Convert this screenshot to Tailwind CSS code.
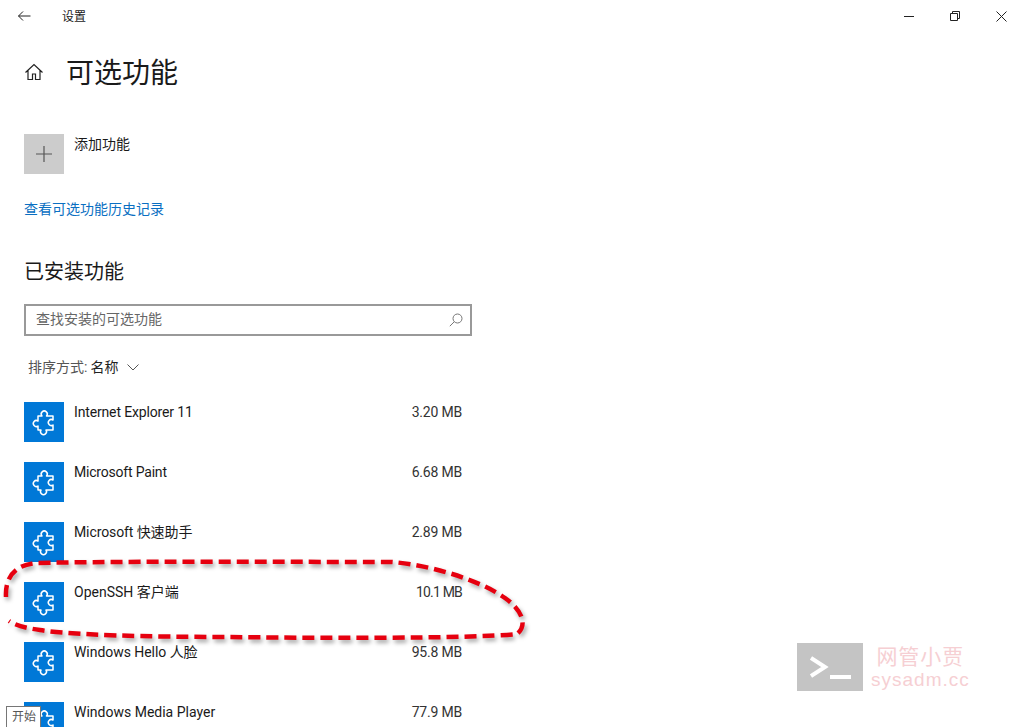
<!DOCTYPE html>
<html lang="zh-CN">
<head>
<meta charset="utf-8">
<title>设置</title>
<script src="https://cdn.jsdelivr.net/npm/@tailwindcss/browser@4"></script>
</head>
<body class="bg-white">
<div class="relative w-[1024px] h-[727px] overflow-hidden bg-white text-[#1a1a1a] font-['Roboto','Noto_Sans_CJK_SC',sans-serif]">
  <!-- title bar -->
  <div class="flex items-center h-[32px]">
    <div class="w-[48px] flex justify-center">
      <svg width="16" height="16" viewBox="0 0 16 16" fill="none" stroke="#222" stroke-width="1"><path d="M2.500 8H14.500M7 3.500L2.500 8 7 12.500"/></svg>
    </div>
    <div class="ml-[14px] text-[12px] leading-[16px] pt-[2px]">设置</div>
    <div class="ml-auto flex">
      <div class="w-[46px] h-[32px] flex items-center justify-center"><svg width="10" height="10" viewBox="0 0 10 10" stroke="#222" fill="none"><path d="M0 5.500H10"/></svg></div>
      <div class="w-[46px] h-[32px] flex items-center justify-center"><svg width="10" height="10" viewBox="0 0 10 10" stroke="#222" fill="none"><path d="M.5 2.500h7v7h-7zM2.500 2.500V.5h7v7h-2"/></svg></div>
      <div class="w-[46px] h-[32px] flex items-center justify-center"><svg width="11" height="11" viewBox="0 0 11 11" stroke="#222" fill="none"><path d="M.5.5l10 10M10.500.5l-10 10"/></svg></div>
    </div>
  </div>
  <!-- page header -->
  <div class="flex items-center pl-[24px] mt-[14px] h-[52px]">
    <svg width="20" height="20" viewBox="0 0 20 20" fill="none" stroke="#222" stroke-width="1.2"><path d="M1.500 10.500L10 2.500l8.500 8M4 8.500V17.500h4.500v-5.500h3v5.500H16V8.500"/></svg>
    <div class="ml-[22px] pt-[4px] text-[28px] leading-[40px]">可选功能</div>
  </div>
  <!-- add feature -->
  <div class="flex pl-[24px] mt-[36px]">
    <div class="w-[40px] h-[40px] bg-[#cccccc] flex items-center justify-center">
      <svg width="16" height="16" viewBox="0 0 16 16" stroke="#555" stroke-width="1.2" fill="none"><path d="M8 0V16M0 8H16"/></svg>
    </div>
    <div class="ml-[10px] text-[14px] leading-[20px]">添加功能</div>
  </div>
  <div class="pl-[24px] mt-[25px] text-[14px] leading-[20px] text-[#0a6fc2]">查看可选功能历史记录</div>
  <!-- installed -->
  <div class="pl-[24px] mt-[39px] text-[20px] leading-[28px]">已安装功能</div>
  <div class="ml-[24px] mt-[18px] w-[448px] h-[32px] border-2 border-[#999999] flex items-center pl-[10px] pr-[7px]">
    <span class="-mt-[2px] text-[14px] leading-[20px] text-[#666666]">查找安装的可选功能</span>
    <svg class="ml-auto" width="14" height="14" viewBox="0 0 14 14" fill="none" stroke="#777" stroke-width="1"><circle cx="8.500" cy="5.500" r="4.500"/><path d="M5.200 8.800L.8 13.200"/></svg>
  </div>
  <div class="flex items-center pl-[28px] mt-[21px] h-[20px] text-[14px] leading-[20px]">
    <span class="text-[#555555]">排序方式:</span><span class="ml-[3px] text-[#222222]">名称</span>
    <svg class="ml-[9px]" width="12" height="12" viewBox="0 0 12 12" fill="none" stroke="#555" stroke-width="1"><path d="M.5 3.500L6 9l5.500-5.500"/></svg>
  </div>
  <!-- list -->
  <div class="mt-[25px] pl-[24px] w-[462px] flex flex-col gap-[20px]">
    <div class="flex h-[40px]">
      <div class="w-[40px] h-[40px] bg-[#0078d7]"><svg width="40" height="40" viewBox="0 0 40 40" fill="none" stroke="#fff" stroke-width="1.500" stroke-linejoin="round"><path d="M14 14H18a3 3 0 1 1 4.500 0H29V18a3 3 0 1 0 0 5V28H22a3 3 0 1 1-5 0H14V24a3 3 0 1 1 0-5Z"/></svg></div>
      <div class="ml-[10px] text-[14px] leading-[20px] tracking-[-0.15px]">Internet Explorer 11</div>
      <div class="ml-auto text-[14px] leading-[20px] tracking-[-0.2px] text-[#333333]">3.20 MB</div>
    </div>
    <div class="flex h-[40px]">
      <div class="w-[40px] h-[40px] bg-[#0078d7]"><svg width="40" height="40" viewBox="0 0 40 40" fill="none" stroke="#fff" stroke-width="1.500" stroke-linejoin="round"><path d="M14 14H18a3 3 0 1 1 4.500 0H29V18a3 3 0 1 0 0 5V28H22a3 3 0 1 1-5 0H14V24a3 3 0 1 1 0-5Z"/></svg></div>
      <div class="ml-[10px] text-[14px] leading-[20px] tracking-[-0.2px]">Microsoft Paint</div>
      <div class="ml-auto text-[14px] leading-[20px] tracking-[-0.2px] text-[#333333]">6.68 MB</div>
    </div>
    <div class="flex h-[40px]">
      <div class="w-[40px] h-[40px] bg-[#0078d7]"><svg width="40" height="40" viewBox="0 0 40 40" fill="none" stroke="#fff" stroke-width="1.500" stroke-linejoin="round"><path d="M14 14H18a3 3 0 1 1 4.500 0H29V18a3 3 0 1 0 0 5V28H22a3 3 0 1 1-5 0H14V24a3 3 0 1 1 0-5Z"/></svg></div>
      <div class="ml-[10px] text-[14px] leading-[20px] tracking-[-0.1px]">Microsoft 快速助手</div>
      <div class="ml-auto text-[14px] leading-[20px] tracking-[-0.2px] text-[#333333]">2.89 MB</div>
    </div>
    <div class="flex h-[40px]">
      <div class="w-[40px] h-[40px] bg-[#0078d7]"><svg width="40" height="40" viewBox="0 0 40 40" fill="none" stroke="#fff" stroke-width="1.500" stroke-linejoin="round"><path d="M14 14H18a3 3 0 1 1 4.500 0H29V18a3 3 0 1 0 0 5V28H22a3 3 0 1 1-5 0H14V24a3 3 0 1 1 0-5Z"/></svg></div>
      <div class="ml-[10px] text-[14px] leading-[20px]">OpenSSH 客户端</div>
      <div class="ml-auto text-[14px] leading-[20px] tracking-[-0.8px] text-[#333333]">10.1 MB</div>
    </div>
    <div class="flex h-[40px]">
      <div class="w-[40px] h-[40px] bg-[#0078d7]"><svg width="40" height="40" viewBox="0 0 40 40" fill="none" stroke="#fff" stroke-width="1.500" stroke-linejoin="round"><path d="M14 14H18a3 3 0 1 1 4.500 0H29V18a3 3 0 1 0 0 5V28H22a3 3 0 1 1-5 0H14V24a3 3 0 1 1 0-5Z"/></svg></div>
      <div class="ml-[10px] text-[14px] leading-[20px] tracking-[-0.05px]">Windows Hello 人脸</div>
      <div class="ml-auto text-[14px] leading-[20px] tracking-[-0.2px] text-[#333333]">95.8 MB</div>
    </div>
    <div class="flex h-[40px]">
      <div class="w-[40px] h-[40px] bg-[#0078d7]"><svg width="40" height="40" viewBox="0 0 40 40" fill="none" stroke="#fff" stroke-width="1.500" stroke-linejoin="round"><path d="M14 14H18a3 3 0 1 1 4.500 0H29V18a3 3 0 1 0 0 5V28H22a3 3 0 1 1-5 0H14V24a3 3 0 1 1 0-5Z"/></svg></div>
      <div class="ml-[10px] text-[14px] leading-[20px]">Windows Media Player</div>
      <div class="ml-auto text-[14px] leading-[20px] tracking-[-0.2px] text-[#333333]">77.9 MB</div>
    </div>
  </div>
  <!-- hand-drawn annotation -->
  <svg class="absolute left-0 top-0 pointer-events-none drop-shadow-[2px_3px_2px_rgba(0,0,0,0.35)]" width="1024" height="727" viewBox="0 0 1024 727" fill="none">
    <path d="M6 597C5 578 14 565 36 563C120 561 300 562 392 562C430 565 480 580 505 598C522 610 528 625 517 634C470 639 300 638 230 637C150 637 70 635 40 630C25 628 15 625 9 621" stroke="#e6000f" stroke-width="4.500" stroke-dasharray="12 6"/>
  </svg>
  <!-- watermark -->
  <div class="absolute left-[797px] top-[643px] flex items-center">
    <div class="w-[66px] h-[48px] bg-[#c4c4c4] flex items-center pl-[13px] pt-[2px]">
      <svg width="44" height="26" viewBox="0 0 44 26" fill="none" stroke="#fff"><path d="M1 3L15 12L1 21" stroke-width="4"/><path d="M20 22H41" stroke-width="4"/></svg>
    </div>
    <div class="ml-[8px] -mt-[3px] flex flex-col items-center">
      <div class="text-[21px] leading-[26px] tracking-[1px] text-[#f6cfd3] font-['Noto_Sans_CJK_SC',sans-serif]">网管小贾</div>
      <div class="mt-[2px] text-[19px] leading-[20px] tracking-[1px] text-[#f6cfd3] font-['Liberation_Sans',sans-serif]">sysadm.cc</div>
    </div>
  </div>
  <!-- tooltip -->
  <div class="absolute left-[6px] top-[706px] w-[35px] h-[24px] border border-[#767676] bg-white text-[12px] leading-[20px] text-[#575757] pl-[5px]">开始</div>
</div>
</body>
</html>
